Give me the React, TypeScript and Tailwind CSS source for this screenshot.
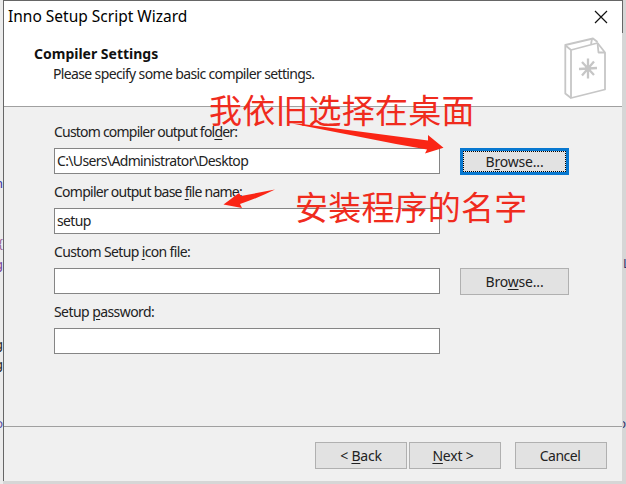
import type { ReactNode } from "react";

function Field({ label, value }: { label: ReactNode; value?: string }) {
  return (
    <div className="h-[60px]">
      <div className="h-[26px] whitespace-nowrap leading-[20px]">{label}</div>
      <div className="h-[26px] w-[386px] whitespace-pre border border-[#858585] bg-white pl-[2px] leading-[23px] tracking-[-0.66px]">
        {value}
      </div>
    </div>
  );
}

function Key({ children }: { children: string }) {
  return <span className="underline decoration-1 underline-offset-2">{children}</span>;
}

function Button({ children, size }: { children: ReactNode; size: string }) {
  return (
    <button className={`${size} h-[27px] shrink-0 whitespace-pre border border-[#b0b0b0] bg-[#e2e2e2] text-center leading-[25px] tracking-[-0.2px]`}>
      {children}
    </button>
  );
}

function Book() {
  return (
    <svg width="48" height="64" viewBox="0 0 48 64" fill="none" stroke="#c6c6c6" strokeWidth="1.8" strokeLinejoin="round">
      <path d="M9 61 L3.3 56.5 V8 L31 1.5 L35.5 5" />
      <path d="M9 13 L35.5 6 L43 15.5 V52.5 L9 61 Z" />
      <path d="M9 13 L3.5 8.5 M30 2 L29 7 M35.5 6 L36.5 15.5 L43 15.5" />
      <path d="M26 21.5 V41.5 M17 32 L35 31 M20 25 L32 38 M32 24.5 L20 38.5" strokeWidth="2.3" />
      <circle cx="26" cy="31.5" r="3" fill="#c6c6c6" stroke="none" />
    </svg>
  );
}

export default function App() {
  return (
    <div className="relative h-[484px] w-[626px] overflow-hidden bg-[#d6d6d6] font-['Noto_Sans','Noto_Sans_CJK_SC',sans-serif] text-[14px] text-[#222]">
      <div className="absolute left-0 top-0 h-[484px] w-[3px] overflow-hidden bg-[#ececec] text-[13px] leading-[14px]">
        <span className="absolute right-0 top-[176px] text-[#3936a5]">n</span>
        <span className="absolute right-0 top-[236px] text-[#9a629a]">{"{"}</span>
        <span className="absolute right-0 top-[257px] text-[#74419b]">g</span>
        <span className="absolute right-0 top-[337px]">g</span>
        <span className="absolute right-0 top-[357px]">g</span>
        <span className="absolute right-0 top-[416px] text-[#5651a5]">o</span>
      </div>
      <div className="absolute right-0 top-0 h-[484px] w-[3px] overflow-hidden text-[13px] leading-[14px] text-[#34346b]">
        <span className="absolute left-0 top-[256px]">L</span>
        <span className="absolute right-0 top-[416px]">o</span>
      </div>
      <div className="absolute right-[3px] top-0 h-[33px] w-px bg-[#666]" />
      <main className="ml-[3px] flex h-[481px] w-[619px] flex-col border-l border-t border-[#666] bg-[#f0f0f0]">
        <header className="flex h-[106px] shrink-0 justify-between border-b border-[#a0a0a0] bg-white">
          <div className="whitespace-nowrap">
            <h1 className="ml-[4px] mt-[3px] text-[15.5px] leading-[24px] text-black">Inno Setup Script Wizard</h1>
            <h2 className="ml-[30px] mt-[16px] text-[14px] font-bold leading-[20px] text-[#111]">Compiler Settings</h2>
            <p className="ml-[49px] leading-[20px] tracking-[-0.64px]">Please specify some basic compiler settings.</p>
          </div>
          <div className="flex w-[60px] flex-col">
            <svg className="ml-[32px] mt-[9px]" width="14" height="14" viewBox="0 0 14 14" stroke="#111" strokeWidth="1.2">
              <path d="M1 1 L13 13 M13 1 L1 13" />
            </svg>
            <div className="mt-[13px]">
              <Book />
            </div>
          </div>
        </header>
        <section className="flex h-[320px] shrink-0 border-b border-[#a0a0a0] pl-[50px] pt-[15px]">
          <div className="w-[406px]">
            <Field label={<span className="tracking-[-0.79px]">Custom compiler output fol<Key>d</Key>er:</span>} value="C:\Users\Administrator\Desktop" />
            <Field label={<span className="tracking-[-0.75px]">Compiler output base <Key>f</Key>ile name:</span>} value="setup" />
            <Field label={<span className="tracking-[-0.64px]">Custom Setup <Key>i</Key>con file:</span>} />
            <Field label={<span className="tracking-[-0.57px]">Setup <Key>p</Key>assword:</span>} />
          </div>
          <div className="flex flex-col gap-[93px] pt-[26px]">
            <button className="h-[27px] w-[109px] border-[3px] border-[#0878d0] bg-[#e2e2e2] leading-[20px] tracking-[-0.2px]">
              <span className="block h-[21px] border border-dotted border-black">B<Key>r</Key>owse...</span>
            </button>
            <Button size="w-[109px]">Bro<Key>w</Key>se...</Button>
          </div>
        </section>
        <footer className="flex pl-[311px] pt-[15px]">
          <Button size="w-[92px]">{"< "}<Key>B</Key>ack</Button>
          <div className="w-[2px]" />
          <Button size="w-[92px] pr-[4px]"><Key>N</Key>{"ext >"}</Button>
          <div className="w-[14px]" />
          <Button size="w-[92px] pr-[2px]"><span className="tracking-[-0.5px]">Cancel</span></Button>
        </footer>
      </main>
      <div className="absolute left-[209px] top-[89px] whitespace-nowrap font-['Noto_Sans_CJK_SC',sans-serif] text-[33px] leading-[40px] tracking-[0.2px] text-[#f02b1d]">我依旧选择在桌面</div>
      <div className="absolute left-[295px] top-[186px] whitespace-nowrap font-['Noto_Sans_CJK_SC',sans-serif] text-[33px] leading-[40px] tracking-[0.2px] text-[#f02b1d]">安装程序的名字</div>
      <svg className="absolute left-0 top-0" width="626" height="484" fill="#fa2515">
        <path d="M292 123.5 L302 124 L428 140.5 L428 135 L443.5 147.7 L425 153.5 L427 149.5 L396 144 Z" />
        <path d="M275 189.5 Q258 198 240 204 L242 208 L223.5 204.5 L239 193 L241 196 Z" />
      </svg>
    </div>
  );
}
